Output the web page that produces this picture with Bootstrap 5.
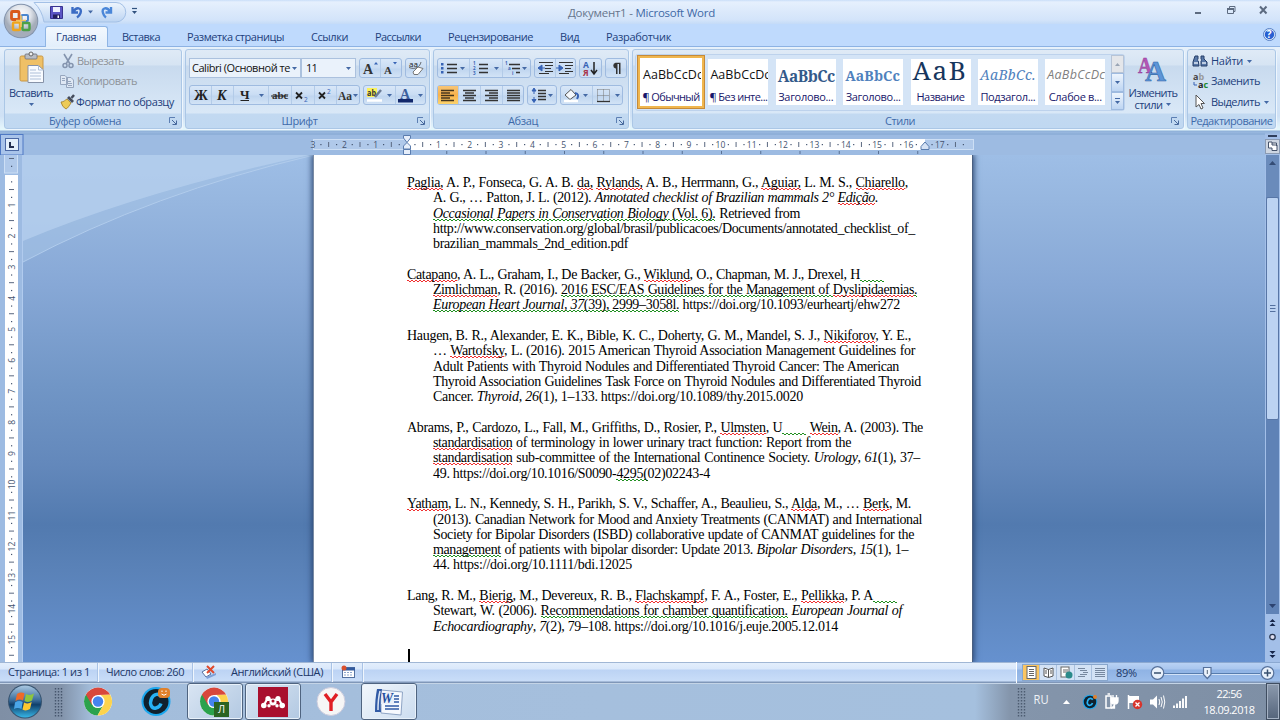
<!DOCTYPE html>
<html lang="ru">
<head>
<meta charset="utf-8">
<title>Документ1 - Microsoft Word</title>
<link rel="stylesheet" href="https://cdn.jsdelivr.net/npm/bootstrap@5.3.0/dist/css/bootstrap.min.css">
<style>
html,body{height:720px;overflow:hidden}
body{width:1280px;font:11px/12px "Open Sans","Noto Sans",sans-serif;color:#1d3f7c;background:#9ebce2}
svg{display:block;flex:none;overflow:visible}
svg text{white-space:pre}
.fit{white-space:nowrap;display:inline-block;flex:none}
.titlebar{height:24px;background:linear-gradient(#c9def8 0,#e6f0fd 2px,#dbe9fb 12px,#d3e4fa 20px,#c4dbf8);position:relative}
.caption{width:147px;margin-left:568px;line-height:26px;font-size:11.5px;color:#66758c}
.caption b{font-weight:400;color:#3f69a6}
.qat{left:0;top:0;z-index:3}
.winbtns{right:0;top:0}
.tabs{height:22px;background:#bfdafd;padding-left:45px;gap:27px;position:relative}
.tabs .nav-link{padding:0;line-height:25px;color:#1d3f7c;font-size:11px}
.tabs .nav-link.active{padding:0 10px;margin-right:-13px;height:21px;margin-top:2px;line-height:20px;background:linear-gradient(#f3f8fe,#e2eefb);border:1px solid #8fb5e4;border-bottom:0;border-radius:3px 3px 0 0;width:63px}
.helpbtn{right:4px;top:4px}
.ribbon{height:88px;padding:3px 4px 0;gap:3px;background:linear-gradient(#8db2e3 0,#8db2e3 1px,#e7f1fb 1px,#d5e5f7 20px,#cfe1f5 70px,#e4f5fb 82px,#e4f8fb 84px,#8fb0d9 85px,#9ebce2)}
.rgroup{height:80px;border:1px solid #abc7e6;border-radius:3px;background:linear-gradient(#dfeaf6 0,#d6e4f3 15px,#c8daee 16px,#d9e8f7 63px,#c2d9f1 64px,#c0d8f1);box-shadow:1px 1px 0 #eef6fd;display:flex;flex-direction:column;flex:none;position:relative}
.rbody{height:64px;flex:none}
.rname{height:15px;line-height:14px;color:#3e6aaa;text-align:center;padding-right:16px}
.launch{position:absolute;right:4px;bottom:3px}
.g1{width:178px}.g2{width:245px}.g3{width:196px}.g4{width:552px}.g5{width:89px}
.g2 .rbody,.g3 .rbody{padding:7.5px 0 0 3px}
.g5 .rname{padding:0}
.row2{margin-top:7px}
.pastecol{width:52px}
.stylecol{width:56px;padding-top:1px}
.strip{display:flex;border:1px solid #9fbbe0;border-radius:3px;height:20px;background:linear-gradient(#d8e7f8,#c9dcf3 9px,#bfd5ef 10px,#d2e3f6);flex:none}
.strip+.strip,.combo+.strip{margin-left:3px}
.strip>button{padding:0;border:0;border-right:1px solid #b3cbe8;background:none;line-height:0;border-radius:0}
.strip>button:last-child{border-right:0}
.strip>.on{background:linear-gradient(#f6c578,#f9b24b 9px,#fbd36d)}
.combo{height:20px;border:1px solid #abc1de;background:#eaf2fb;color:#111;font-size:11px;line-height:18px;padding-left:2px;display:flex;justify-content:space-between;overflow:hidden;flex:none}
.combo.face{width:112px}.combo.size{width:55px;padding-left:4px}
.cmd{display:flex;align-items:center;height:20.3px;padding-top:2px}
.off{color:#8d9299}
.off .fit{margin-left:1px}
.gallery{width:490px;height:57px;background:#d4e4f6;border:1px solid #bdd2ec;border-radius:3px;padding:0;display:flex;margin-left:2px;flex:none}
.gallery .tile{width:60px;height:46px;margin:4px 3.7px 0;background:#fff;overflow:hidden;flex:none;position:relative}
.gallery .tile.sel{box-shadow:0 0 0 1px #fff,0 0 0 3px #f0b64e,0 0 0 4px #c58a3a;margin-left:5px;height:46px}
.tile .sample{height:31px;line-height:32px;color:#111;font-family:"Open Sans";font-size:12.5px;white-space:nowrap;overflow:hidden;padding-left:2px}
.tile .cap{color:#17176b;text-align:center;line-height:13px;white-space:nowrap}
.s-h1{font:bold 15.5px/34px "Noto Serif","DejaVu Serif","Liberation Serif",serif!important;color:#345a8a!important}
.s-h2{font:bold 14px/34px "Noto Serif","DejaVu Serif","Liberation Serif",serif!important;color:#4f81bd!important}
.s-tt{font:26px/22px "Noto Serif","Liberation Serif",serif!important;color:#17365d!important}
.s-st{font:italic 14px/32px "Noto Serif","Liberation Serif",serif!important;color:#4f81bd!important}
.s-wk{font-style:italic;color:#7f7f7f!important}
.gscroll{margin-left:auto}
.work{height:528px;display:grid;grid-template:21px 507px/1fr 15px;background:#9dbbe2}
.desk{grid-column:1;display:flex;background:linear-gradient(#9ebee6 0,#96b6df 50px,#87a8d6 130px,#7196c6 230px,#6388bb 310px,#527aaf 370px,#5a82b8 415px,#6590cd 500px,#6691cf);position:relative;overflow:hidden}
.vruler{width:23px;background:#9dbbe2;flex:none}
.swoosh{left:23px;top:0;position:absolute}
.page{width:660px;height:507px;margin-left:290px;background:#fff;border-left:1px solid #7a8ba3;border-right:1px solid #4a5f80;box-shadow:0 0 6px 1px #28436f;padding:20px 0 0 93px;font:14px/15.31px "Liberation Serif",serif;color:#000;z-index:1;flex:none}
.page p{margin:0 0 15.31px}
.ln{display:block;margin-left:26px;white-space:pre;height:15.31px}
.ln:first-child{margin-left:0}
.sp,.gr{background:repeating-linear-gradient(90deg,#f03030 0 2px,transparent 2px 4px) 0 calc(100% - 1px)/100% 1px no-repeat,repeating-linear-gradient(90deg,transparent 0 2px,#f03030 2px 4px) 0 100%/100% 1px no-repeat}
.gr{background-image:repeating-linear-gradient(90deg,#208f20 0 2px,transparent 2px 4px),repeating-linear-gradient(90deg,transparent 0 2px,#208f20 2px 4px)}
.gap24{display:inline-block;width:24px;height:15px;vertical-align:bottom;letter-spacing:0}
.caret{width:2px;height:14px;background:#000;margin-left:1px}
.vscroll{grid-column:2;grid-row:1/3}
.status{height:21px;background:linear-gradient(#5d7fae 0,#e3eefc 1px,#dae8fb 7px,#bcd3f4 8px,#c9ddf8 19px,#8097b8 20px);color:#1c3767}
.status .cell{height:19px;display:flex;align-items:center;border-right:1px solid #a9c3e6;box-shadow:1px 0 0 #f0f6fd;flex:none;padding:0 0 1px 8px}
.c1{width:98px}.c2{width:95px}.c3{width:139px}.c4{width:31px}
.stright{width:264px;background:linear-gradient(#5d7fae 0,#b9d2f4 1px,#a9c6ee 7px,#8fb3e4 8px,#9cbdea 19px,#8097b8 20px);border-left:1px solid #fff;height:21px}
.views{display:flex;border:1px solid #88a6cc;background:#d3e2f5;height:17px;margin-left:5px}
.taskbar{height:37px;background:linear-gradient(90deg,#7f8fa5 0,#8394ab 62px,#a3bddb 92px,#a5bfdd 600px,#a5c0de 975px,#8495ab 1010px,#7e8fa5);box-shadow:inset 0 1px 0 #c4d4e6}
.tbtn{width:56px;height:37px;border:1px solid #4f6480;border-radius:3px;box-shadow:inset 0 0 0 1px #e8f1fa;background:linear-gradient(135deg,#d9e5f3,#b3c9e2);flex:none;display:flex;justify-content:center;align-items:center}
.tbtn+.tbtn{margin-left:2px}
.tbtn.cur{background:linear-gradient(135deg,#f2f7fc,#cbdcef)}
.clock{width:74px;color:#fff;text-align:center;line-height:16px;padding-top:3px}
.peek{width:14px;height:37px;border:1px solid #3f4d60;box-shadow:inset 0 0 0 1px #a5b2c4;background:linear-gradient(#8c9aae,#55657b)}
</style>
</head>
<body>
<svg width="0" height="0" class="position-absolute">
<defs>
<g id="dd"><path d="M0 0H5L2.5 3Z" fill="#4469a5"/></g>
<g id="launcher"><path d="M.5 6V.5H6" fill="none" stroke="#5c7fb3"/><path d="M3 3L7 7M7.5 3.5V7.5H3.5" fill="none" stroke="#47689c"/></g>
<g id="chrome"><circle r="14" fill="#fff"/><path d="M-12.1-7A14 14 0 0 0-.5 14L5.5 3.5L0 0Z" fill="#2ba24c"/><path d="M12.1-7A14 14 0 0 1-.5 14L5.5 3.2L3-7Z" fill="#fdd34d"/><path d="M-12.1-7A14 14 0 0 1 12.1-7L0-6.5L-6 3.5Z" fill="#d8483c"/><circle r="6.6" fill="#fff"/><circle r="5.2" fill="#4584ee"/></g>
<g id="cicon"><circle r="14.5" fill="#1ba7ee"/><circle r="12.5" fill="#10212e"/><path d="M5.5-4.5C3-8.5-2-8-4.5-3C-7 3-4 7.5 0 6.5C3 6 4.5 3.5 5 2" fill="none" stroke="#27b2f5" stroke-width="3.4"/></g>
<linearGradient id="orb" x2="0" y2="1"><stop stop-color="#a9c8e2"/><stop offset=".45" stop-color="#3c6e9c"/><stop offset=".6" stop-color="#103f6b"/><stop offset="1" stop-color="#37b6e6"/></linearGradient>
<radialGradient id="office" cy=".3"><stop stop-color="#fff"/><stop offset=".6" stop-color="#dfe3ea"/><stop offset="1" stop-color="#a5adba"/></radialGradient>
<linearGradient id="gl" x2="0" y2="1"><stop stop-color="#eef5fd"/><stop offset="1" stop-color="#bcd4f2"/></linearGradient>
</defs>
</svg>

<header class="titlebar">
  <div class="caption fit" data-w="147">Документ1 - <b>Microsoft Word</b></div>
  <div class="position-absolute qat">
    <svg width="145" height="44">
      <path d="M34 2.500H116a9.500 9.500 0 0 1 0 19.500H44Q42 10 34 2.500Z" fill="url(#gl)" stroke="#a3c0e6"/>
      <path d="M50.500 6.500H62.500V18.500H50.500Z" fill="#5b55c4" stroke="#38338f"/><path d="M53 7H60V12H53Z" fill="#eef1ff"/><path d="M53 14.500H60V18.500H53Z" fill="#23205e"/><path d="M57.500 15.500H59V18H57.500Z" fill="#fff"/>
      <path d="M72.500 7V12.500H78M73.500 12C76 6.500 82.500 7.500 80.500 13C79.800 15 78.500 16.500 77 17.500" fill="none" stroke="#3b6cc4" stroke-width="2.400"/>
      <path d="M111 7V12.500H105.500M110 12C107.500 6.500 101 7.500 103 13C103.500 15 104.500 16.500 106 17.500" fill="none" stroke="#4a86d8" stroke-width="2.400"/>
      <use href="#dd" x="88" y="10.500"/><path d="M132 8.500H137" stroke="#31527f" stroke-width="1.200"/><path d="M132 11H137L134.500 14Z" fill="#31527f"/>
      <circle cx="21" cy="21" r="17.300" fill="#8393ac"/><circle cx="21" cy="21" r="16.300" fill="url(#office)"/>
      <g fill="none"><rect x="11.500" y="11.500" width="7.500" height="8" rx="1" stroke="#d9581c" stroke-width="2.800"/><rect x="21.500" y="15" width="6.500" height="6" rx="1" stroke="#4a86cf" stroke-width="2"/><rect x="13" y="22.500" width="7" height="7.500" rx="1" stroke="#efa51e" stroke-width="2.400"/><rect x="22.500" y="23" width="7" height="7" rx="1" stroke="#4ca146" stroke-width="2.400"/></g>
      <path d="M16 20.500H26M21 15.500V27" stroke="#f4c45c" stroke-width="1.600"/>
    </svg>
  </div>
  <div class="position-absolute winbtns"><svg width="90" height="24"><path d="M5 13H11" stroke="#5d6b80" stroke-width="2"/><path d="M37.500 8.500H43.500V13.500H37.500ZM39.500 8V6.500H45V11.500H44" fill="none" stroke="#5d6b80"/><path d="M37 9H44" stroke="#5d6b80" stroke-width="2"/><path d="M70 6.500L76.500 13.500M76.500 6.500L70 13.500" stroke="#5d6b80" stroke-width="2"/></svg></div>
</header>

<nav class="nav tabs flex-nowrap">
  <a class="nav-link active"><span class="fit" data-w="40">Главная</span></a>
  <a class="nav-link"><span class="fit" data-w="38">Вставка</span></a>
  <a class="nav-link"><span class="fit" data-w="97">Разметка страницы</span></a>
  <a class="nav-link"><span class="fit" data-w="37">Ссылки</span></a>
  <a class="nav-link"><span class="fit" data-w="46">Рассылки</span></a>
  <a class="nav-link"><span class="fit" data-w="85">Рецензирование</span></a>
  <a class="nav-link"><span class="fit" data-w="19">Вид</span></a>
  <a class="nav-link"><span class="fit" data-w="65">Разработчик</span></a>
  <svg class="position-absolute helpbtn" width="13" height="13"><circle cx="6.500" cy="6.500" r="6" fill="#e6effb" stroke="#557fc4"/><circle cx="6.500" cy="6.500" r="4.700" fill="#2860d2"/><text x="3.800" y="10.300" font-size="10" font-weight="bold" fill="#fff">?</text></svg>
</nav>

<section class="ribbon d-flex">
  <div class="rgroup g1">
    <div class="rbody d-flex">
      <div class="text-center pastecol">
        <svg width="52" height="37"><rect x="15" y="6" width="23" height="25" rx="1.500" fill="#efc066" stroke="#c99743"/><rect x="20" y="4" width="12" height="5" rx="1" fill="#b9bdc4" stroke="#6c7078" stroke-width=".8"/><circle cx="26" cy="4" r="2" fill="#eee" stroke="#666"/><path d="M23 15.500H33.500L38.500 20V32.500H23Z" fill="#f8fbff" stroke="#8793a8"/><path d="M33.500 15.500V20H38.500M25 20H31M25 23H36M25 26H36M25 29H36" fill="none" stroke="#aebfd8"/></svg>
        <span class="fit" data-w="44">Вставить</span>
        <svg width="52" height="8"><use href="#dd" x="24" y="4"/></svg>
      </div>
      <div class="ps-1">
        <div class="cmd off"><svg width="15" height="16"><path d="M3 1L9 11M11 1L5 11" stroke="#8494ae" stroke-width="1.600"/><circle cx="4" cy="12.500" r="2" fill="none" stroke="#8494ae" stroke-width="1.500"/><circle cx="10" cy="12.500" r="2" fill="none" stroke="#8494ae" stroke-width="1.500"/></svg><span class="fit" data-w="47">Вырезать</span></div>
        <div class="cmd off"><svg width="15" height="16"><path d="M-.5 2.500H4L6.500 5V11.500H-.5ZM5.500 4.500H10L12.500 7V14.500H5.500Z" fill="#dfe8f4" stroke="#96a6be"/><path d="M1 5.500H4M1 7.500H4M7 8.500H10M7 10.500H11M7 12.500H11" stroke="#96a6be"/></svg><span class="fit" data-w="60">Копировать</span></div>
        <div class="cmd"><svg width="15" height="16"><path d="M0 8C3 8 4 6 6 5L10 9C8 12 7 14 5 15Q1 13 0 8Z" fill="#edcb57" stroke="#a17c25" stroke-width=".8"/><path d="M6 4L11 9L13 7L8 2Z" fill="#454c5c"/><path d="M10.500 4L13 1" stroke="#434b5b" stroke-width="2.500"/></svg><span class="fit" data-w="98">Формат по образцу</span></div>
      </div>
    </div>
    <div class="rname"><span class="fit" data-w="72">Буфер обмена</span></div><svg class="launch" width="8" height="8"><use href="#launcher"/></svg>
  </div>

  <div class="rgroup g2">
    <div class="rbody">
      <div class="d-flex">
        <div class="combo face"><span class="fit" data-w="98">Calibri (Основной те</span><svg width="9" height="18"><use href="#dd" x="1" y="8"/></svg></div>
        <div class="combo size"><span class="fit" data-w="11">11</span><svg width="12" height="18"><use href="#dd" x="3" y="8"/></svg></div>
        <div class="strip"><button><svg width="20" height="18"><text x="3" y="14.500" font-family="Liberation Serif" font-weight="bold" font-size="14" fill="#333">A</text><path d="M14 5.500L16 3L18 5.500Z" fill="#3763b5"/></svg></button><button><svg width="20" height="18"><text x="3" y="14.500" font-family="Liberation Serif" font-weight="bold" font-size="11" fill="#333">A</text><path d="M12 3L16 3L14 5.500Z" fill="#3763b5"/></svg></button></div>
        <div class="strip"><button><svg width="20" height="18"><text x="3" y="8" font-size="8" fill="#222">aa</text><path d="M3 8.500C9 11 14 8 15 3" stroke="#333" fill="none" stroke-width=".7"/><path d="M7 13L12 8L17 9.500L12 15.500H8Z" fill="#fff" stroke="#777"/></svg></button></div>
      </div>
      <div class="d-flex row2">
        <div class="strip"><button><svg width="21" height="18"><text x="4" y="14" font-size="14" font-weight="bold" font-family="Liberation Serif" fill="#222">Ж</text></svg></button><button><svg width="21" height="18"><text x="5" y="14" font-size="14" font-weight="bold" font-style="italic" font-family="Liberation Serif" fill="#222">К</text></svg></button><button><svg width="34" height="18"><text x="6" y="12.500" font-size="13" font-weight="bold" font-family="Liberation Serif" fill="#222">Ч</text><path d="M6.500 14.500H15" stroke="#222"/><use href="#dd" x="25" y="8"/></svg></button><button><svg width="22" height="18"><text x="3" y="13" font-size="11" font-weight="bold" font-family="Liberation Serif" fill="#333">abc</text><path d="M2 10H19" stroke="#222"/></svg></button><button><svg width="22" height="18"><path d="M4 6.500L10 12.500M10 6.500L4 12.500" stroke="#222" stroke-width="1.800"/><text x="12" y="15.500" font-size="6.500" fill="#3763b5">2</text></svg></button><button><svg width="21" height="18"><path d="M4 6.500L10 12.500M10 6.500L4 12.500" stroke="#222" stroke-width="1.800"/><text x="12" y="7.500" font-size="6.500" fill="#3763b5">2</text></svg></button><button><svg width="22" height="18"><text x="1" y="14" font-size="12.500" font-weight="bold" font-family="Liberation Serif" fill="#333" textLength="14" lengthAdjust="spacingAndGlyphs">Aa</text><use href="#dd" x="16" y="8"/></svg></button></div>
        <div class="strip"><button><svg width="31" height="18"><rect x="3" y="2" width="10" height="9" fill="#fbf25a"/><text x="3" y="10" font-size="9" font-weight="bold" fill="#333" textLength="9" lengthAdjust="spacingAndGlyphs">ab</text><path d="M11 11L17 4" stroke="#6b7c96" stroke-width="2.500"/><path d="M3 14.500H18" stroke="#fff" stroke-width="2.500"/><use href="#dd" x="23" y="8"/></svg></button><button><svg width="29" height="18"><text x="4" y="12.500" font-size="14" font-weight="bold" font-family="Liberation Serif" fill="#3c5f9d">A</text><rect x="2" y="13" width="15" height="3.500" fill="#13286b"/><use href="#dd" x="22" y="8"/></svg></button></div>
      </div>
    </div>
    <div class="rname"><span class="fit" data-w="36">Шрифт</span></div><svg class="launch" width="8" height="8"><use href="#launcher"/></svg>
  </div>

  <div class="rgroup g3">
    <div class="rbody">
      <div class="d-flex">
        <div class="strip"><button><svg width="31" height="18"><path d="M9 5.500H19M9 9.500H19M9 13.500H19" stroke="#333" stroke-width="1.300"/><g fill="#3763b5"><rect x="3" y="4" width="2.500" height="2.500"/><rect x="3" y="8" width="2.500" height="2.500"/><rect x="3" y="12" width="2.500" height="2.500"/></g><use href="#dd" x="22" y="8"/></svg></button><button><svg width="32" height="18"><path d="M9 5.500H18M9 9.500H18M9 13.500H18" stroke="#333" stroke-width="1.300"/><g fill="#3763b5" font-size="4.500" font-weight="bold"><text x="3" y="6">1</text><text x="3" y="11">2</text><text x="3" y="16">3</text></g><use href="#dd" x="24" y="8"/></svg></button><button><svg width="27" height="18"><path d="M6 5.500H17M9 9.500H17M13 13.500H17" stroke="#333" stroke-width="1.300"/><g fill="#3763b5" font-size="4.500" font-weight="bold"><text x="2" y="6">1</text><text x="5" y="11">a</text><text x="9" y="16">i</text></g><use href="#dd" x="19" y="8"/></svg></button></div>
        <div class="strip"><button><svg width="20" height="18"><path d="M4 3.500H18M10 6.500H18M10 9.500H16M10 12.500H18M4 14.500H14" stroke="#333" stroke-width="1.200"/><path d="M3 9L7 6V12ZM6 9H10" fill="#3763b5" stroke="#3763b5"/></svg></button><button><svg width="19" height="18"><path d="M3 3.500H17M9 6.500H17M9 9.500H15M9 12.500H17M3 14.500H13" stroke="#333" stroke-width="1.200"/><path d="M7 9L3 6V12ZM0 9H4" fill="#3763b5" stroke="#3763b5"/></svg></button></div>
        <div class="strip"><button><svg width="21" height="18"><text x="3" y="8.500" font-size="8.500" font-weight="bold" fill="#3763b5">А</text><text x="3" y="16.500" font-size="8.500" font-weight="bold" fill="#a8324a">Я</text><path d="M14 3V14M11 11L14 15L17 11" fill="none" stroke="#222" stroke-width="1.500"/></svg></button></div>
        <div class="strip"><button><svg width="20" height="18"><path d="M14.500 3.700H9.500A3 3 0 0 0 9.500 9.500H10V15H11.500V5H13V15H14.500Z" fill="#333"/></svg></button></div>
      </div>
      <div class="d-flex row2">
        <div class="strip"><button class="on"><svg width="20" height="18"><path d="M3 4.500H16M3 7H12M3 9.500H16M3 12H12M3 14.500H16" stroke="#44351c" stroke-width="1.300"/></svg></button><button><svg width="21" height="18"><path d="M4 4.500H17M6 7H15M4 9.500H17M6 12H15M4 14.500H17" stroke="#333" stroke-width="1.300"/></svg></button><button><svg width="21" height="18"><path d="M4 4.500H17M8 7H17M4 9.500H17M8 12H17M4 14.500H17" stroke="#333" stroke-width="1.300"/></svg></button><button><svg width="20" height="18"><path d="M4 4.500H17M4 7H17M4 9.500H17M4 12H17M4 14.500H17" stroke="#333" stroke-width="1.300"/></svg></button></div>
        <div class="strip"><button><svg width="28" height="18"><path d="M10 4.500H18M10 7.500H18M10 10.500H18M10 13.500H18" stroke="#333" stroke-width="1.300"/><path d="M6 3V8M6 11V16M4 5L6 2L8 5ZM4 13.500L6 16.500L8 13.500Z" fill="#3763b5" stroke="#3763b5"/><use href="#dd" x="20" y="8"/></svg></button></div>
        <div class="strip"><button><svg width="31" height="18"><path d="M4 9L10 3.500L15 9L9 13.500Z" fill="#f4f8fd" stroke="#555"/><path d="M14 7Q19 8 16 13" stroke="#3763b5" fill="none" stroke-width="2"/><path d="M3 15H17" stroke="#fff" stroke-width="2.500"/><use href="#dd" x="22" y="8"/></svg></button><button><svg width="29" height="18"><path d="M4.500 3.500H16.500V15M4.500 3.500V15M10.500 3.500V15M4.500 9.500H16.500" stroke="#777" stroke-dasharray="1 1" fill="none"/><path d="M4 15.500H17" stroke="#333" stroke-width="1.300"/><use href="#dd" x="22" y="8"/></svg></button></div>
      </div>
    </div>
    <div class="rname"><span class="fit" data-w="30">Абзац</span></div><svg class="launch" width="8" height="8"><use href="#launcher"/></svg>
  </div>

  <div class="rgroup g4">
    <div class="rbody d-flex pt-1">
      <div class="gallery">
        <div class="tile sel"><div class="sample"><span class="fit" data-w="60">AaBbCcDc</span></div><div class="cap"><span class="fit" data-w="57">¶ Обычный</span></div></div>
        <div class="tile"><div class="sample"><span class="fit" data-w="60">AaBbCcDc</span></div><div class="cap"><span class="fit" data-w="58">¶ Без инте...</span></div></div>
        <div class="tile"><div class="sample s-h1"><span class="fit" data-w="57">AaBbCc</span></div><div class="cap"><span class="fit" data-w="55">Заголово...</span></div></div>
        <div class="tile"><div class="sample s-h2"><span class="fit" data-w="55">AaBbCc</span></div><div class="cap"><span class="fit" data-w="55">Заголово...</span></div></div>
        <div class="tile"><div class="sample s-tt"><span class="fit" data-w="55">AaB</span></div><div class="cap"><span class="fit" data-w="48">Название</span></div></div>
        <div class="tile"><div class="sample s-st"><span class="fit" data-w="56">AaBbCc.</span></div><div class="cap"><span class="fit" data-w="55">Подзагол...</span></div></div>
        <div class="tile"><div class="sample s-wk"><span class="fit" data-w="58">AaBbCcDc</span></div><div class="cap"><span class="fit" data-w="53">Слабое в...</span></div></div>
        <svg class="gscroll" width="13" height="55"><rect x=".5" y=".5" width="12" height="17" fill="#e4e6ea" stroke="#b7c4d6"/><path d="M4 11H9L6.500 8Z" fill="#9aa5b5"/><rect x=".5" y="18.500" width="12" height="18" fill="url(#gl)" stroke="#9fbbe0"/><use href="#dd" x="4" y="26"/><rect x=".5" y="37.500" width="12" height="17" fill="url(#gl)" stroke="#9fbbe0"/><path d="M4 43.500H9" stroke="#4469a5"/><use href="#dd" x="4" y="46"/></svg>
      </div>
      <div class="text-center stylecol">
        <svg width="56" height="32"><text x="13" y="18" font-size="24" font-weight="bold" font-family="Liberation Serif" fill="#b455b5" stroke="#8c3b95" stroke-width=".5" textLength="14" lengthAdjust="spacingAndGlyphs">A</text><text x="20" y="26" font-size="29" font-weight="bold" font-family="Liberation Serif" fill="#5d95d8" stroke="#3568a8" stroke-width=".6" textLength="21" lengthAdjust="spacingAndGlyphs">A</text></svg>
        <span class="fit" data-w="49">Изменить</span><div class="d-flex justify-content-center"><span class="fit" data-w="28">стили</span><svg width="9" height="12"><use href="#dd" x="3" y="4"/></svg></div>
      </div>
    </div>
    <div class="rname"><span class="fit" data-w="30">Стили</span></div><svg class="launch" width="8" height="8"><use href="#launcher"/></svg>
  </div>

  <div class="rgroup g5">
    <div class="rbody ps-1">
      <div class="cmd"><svg width="19" height="16"><path d="M3 3H6V6L7 13H1V9ZM9 3H12V6L15 9V13H9Z" fill="#5878a8" stroke="#263e68"/><path d="M6 7H9M2 10H6M10 10H14" stroke="#dfe9f5" stroke-width="1.500"/></svg><span class="fit" data-w="32">Найти</span><svg width="12" height="10"><use href="#dd" x="4" y="4"/></svg></div>
      <div class="cmd"><svg width="19" height="16"><text x="1" y="7" font-size="9" font-weight="bold" fill="#444">a<tspan fill="#999">b</tspan></text><text x="6" y="15" font-size="9" font-weight="bold" fill="#222">a<tspan fill="#218a31">c</tspan></text><path d="M2 9V12H5" fill="none" stroke="#3763b5"/></svg><span class="fit" data-w="49">Заменить</span></div>
      <div class="cmd"><svg width="19" height="16"><path d="M4 1V13L7 10.500L9 15L11 14L9 9.500H12.500Z" fill="#fff" stroke="#555"/></svg><span class="fit" data-w="49">Выделить</span><svg width="12" height="10"><use href="#dd" x="4" y="4"/></svg></div>
    </div>
    <div class="rname"><span class="fit" data-w="82">Редактирование</span></div>
  </div>
</section>

<main class="work">
  <svg id="hruler" width="1265" height="21"><rect x="0" y="-1" width="1265" height="2" fill="#8fb0d9"/><rect x=".5" y=".5" width="22.500" height="20.500" fill="#a9c4ea" stroke="#4f79c4"/><rect x="5.500" y="4.500" width="13" height="12" fill="#e3effb" stroke="#4b69a5"/><path d="M10 8V13H14" fill="none" stroke="#222f50" stroke-width="2"/><rect x="313.500" y="5.500" width="660" height="10" fill="#b0c9ea" stroke="#cddff5"/><rect x="407" y="5" width="518" height="11" fill="#fff"/></svg>
  <div class="vscroll"><svg width="15" height="528"><rect width="15" height="528" fill="#a3bfe8"/><path d="M3 2H12" stroke="#2f3f5c" stroke-width="2"/><rect x=".5" y="5.500" width="14" height="14" fill="#ced6e2" stroke="#8b9bb3"/><path d="M3.500 8H7V11H12V16.500H7V14H3.500ZM7 9H11.500V12" fill="#fff" stroke="#45526a"/><rect x="1" y="21" width="13" height="459" fill="#5f82b6"/><rect x="1" y="21" width="13" height="42" fill="#6a8bbb"/><path d="M4 31H11L7.500 27Z" fill="#344c75"/><rect x="1.500" y="63.500" width="12" height="222" rx="1.500" fill="#bcd3f2" stroke="#5876a6"/><path d="M5 171.500H10.500M5 174.500H10.500M5 177.500H10.500" stroke="#54719f"/><path d="M4 470H11L7.500 474Z" fill="#2c4370"/><path d="M4.500 488L7.500 485L10.500 488ZM4.500 492L7.500 489L10.500 492Z" fill="#16264a"/><circle cx="7.500" cy="503" r="2.700" fill="#dde" stroke="#26344f" stroke-width="1.300"/><path d="M4.500 517L7.500 520L10.500 517ZM4.500 521L7.500 524L10.500 521Z" fill="#16264a"/></svg></div>
  <div class="desk">
    <svg class="swoosh" width="291" height="110"><path d="M0 0H291Q130 38 0 107Z" fill="#a4c1e4" opacity=".6"/><path d="M0 0H287Q120 36 0 86Z" fill="#bad2f0" opacity=".65"/><path d="M0 107Q130 38 291 0" fill="none" stroke="#b1ccec" stroke-width="1"/></svg>
    <div class="vruler"><svg id="vruler" width="23" height="507"><rect x="4.500" y="-1" width="13" height="19" fill="#b0c9ea" stroke="#cddff5"/><rect x="5" y="20" width="13" height="490" fill="#fff"/><path d="M22.500 0V507" stroke="#b1cbee"/></svg></div>
    <article class="page">
      <p><span class="ln" data-w="501"><span class="sp">Paglia,</span> A. P., Fonseca, G. A. B. <span class="sp">da,</span> <span class="sp">Rylands,</span> A. B., Herrmann, G., <span class="sp">Aguiar,</span> L. M. S., <span class="sp">Chiarello</span>,</span><span class="ln" data-w="445">A. G., … Patton, J. L. (2012). <i>Annotated checklist of Brazilian mammals 2° <span class="sp">Edição</span>.</i></span><span class="ln" data-w="367"><i class="gr">Occasional Papers in Conservation Biology</i><span class="gr"> (Vol. 6).</span> Retrieved from</span><span class="ln" data-w="482">http://www.conservation.org/global/brasil/publicacoes/Documents/annotated_checklist_of_</span><span class="ln" data-w="195">brazilian_mammals_2nd_edition.pdf</span></p>
      <p><span class="ln" data-w="477"><span class="sp">Catapano</span>, A. L., Graham, I., De Backer, G., <span class="sp">Wiklund</span>, O., Chapman, M. J., Drexel, H<span class="gr gap24"></span></span><span class="ln" data-w="484"><span class="sp">Zimlichman</span>, R. (2016). <span class="gr">2016 ESC/EAS Guidelines for the Management of </span><span class="sp">Dyslipidaemias</span><span class="gr">.</span></span><span class="ln" data-w="467"><i class="gr">European Heart Journal, 37</i><span class="gr">(39), 2999–3058l.</span> https://doi.org/10.1093/eurheartj/ehw272</span></p>
      <p><span class="ln" data-w="504">Haugen, B. R., Alexander, E. K., Bible, K. C., Doherty, G. M., Mandel, S. J., <span class="sp">Nikiforov</span>, Y. E.,</span><span class="ln" data-w="482">… <span class="sp">Wartofsky</span>, L. (2016). 2015 American Thyroid Association Management Guidelines for</span><span class="ln" data-w="466">Adult Patients with Thyroid Nodules and Differentiated Thyroid Cancer: The American</span><span class="ln" data-w="488">Thyroid Association Guidelines Task Force on Thyroid Nodules and Differentiated Thyroid</span><span class="ln" data-w="370">Cancer. <i>Thyroid</i>, <i>26</i>(1), 1–133. https://doi.org/10.1089/thy.2015.0020</span></p>
      <p><span class="ln" data-w="516">Abrams, P., Cardozo, L., Fall, M., Griffiths, D., Rosier, P., <span class="sp">Ulmsten</span>, U<span class="gr gap24"></span> <span class="sp">Wein</span>, A. (2003). The</span><span class="ln" data-w="418"><span class="sp">standardisation</span> of terminology in lower urinary tract function: Report from the</span><span class="ln" data-w="487"><span class="sp">standardisation</span> sub-committee of the International Continence Society. <i>Urology</i>, <i>61</i>(1), 37–</span><span class="ln" data-w="277">49. https://doi.org/10.1016/S0090-<span class="gr">4295(</span>02)02243-4</span></p>
      <p><span class="ln" data-w="504"><span class="sp">Yatham</span>, L. N., Kennedy, S. H., Parikh, S. V., Schaffer, A., Beaulieu, S., <span class="sp">Alda</span>, M., … <span class="sp">Berk</span>, M.</span><span class="ln" data-w="489">(2013). Canadian Network for Mood and Anxiety Treatments (CANMAT) and International</span><span class="ln" data-w="481">Society for Bipolar Disorders (ISBD) collaborative update of CANMAT guidelines for the</span><span class="ln" data-w="475"><span class="gr">management</span> of patients with bipolar disorder: Update 2013. <i>Bipolar Disorders</i>, <i>15</i>(1), 1–</span><span class="ln" data-w="199">44. https://doi.org/10.1111/bdi.12025</span></p>
      <p><span class="ln" data-w="490">Lang, R. M., <span class="sp">Bierig</span>, M., Devereux, R. B., <span class="sp">Flachskampf</span>, F. A., Foster, E., <span class="sp">Pellikka</span>, P. A<span class="gr gap24"></span></span><span class="ln" data-w="469">Stewart, W. (2006). <span class="gr">Recommendations for chamber quantification.</span> <i>European Journal of</i></span><span class="ln" data-w="405"><i>Echocardiography</i>, <i>7</i>(2), 79–108. https://doi.org/10.1016/j.euje.2005.12.014</span></p>
      <div class="caret"></div>
    </article>
  </div>
</main>

<footer class="status d-flex justify-content-between">
  <div class="d-flex align-items-center">
    <div class="cell c1"><span class="fit" data-w="82">Страница: 1 из 1</span></div>
    <div class="cell c2"><span class="fit" data-w="78">Число слов: 260</span></div>
    <div class="cell c3"><svg width="30" height="16"><path d="M1 8L6 5L10 10L5 13Z" fill="#fff" stroke="#57719f"/><path d="M5 13L15 9V11L6 15Z" fill="#7da0d8"/><path d="M6 2L13 9M13 2L6 9" stroke="#e0492c" stroke-width="2"/></svg><span class="fit" data-w="92">Английский (США)</span></div>
    <div class="cell c4"><svg width="16" height="14"><rect x="2.500" y="2.500" width="12" height="10" fill="#fff" stroke="#54719f"/><path d="M2 4H15" stroke="#335a9d" stroke-width="3"/><path d="M4 7.500H13M4 10H13" stroke="#8ca5cb" stroke-dasharray="2 1"/><circle cx="4" cy="3" r="2.500" fill="#d9502d"/></svg></div>
  </div>
  <div class="stright d-flex align-items-center">
    <div class="views"><svg width="84" height="15"><rect width="16" height="15" fill="#fbc561"/><rect x="4" y="1.500" width="9" height="12" fill="#fff" stroke="#666"/><path d="M6 4.500H11M6 6.500H11M6 8.500H11M6 10.500H11" stroke="#666"/><path d="M21 3L25.500 4.500L30 3V11L25.500 12.500L21 11ZM25.500 4V12.500M22 6H24M22 8H24M27 6H29M27 8H29" fill="#fff" stroke="#555"/><rect x="38" y="2" width="8" height="10" fill="#fff" stroke="#666"/><path d="M40 5H45M40 7H45" stroke="#666"/><circle cx="46" cy="10" r="3.500" fill="#2b8a8a"/><path d="M55 3.500H62M57 5.500H64M60 7.500H65M57 9.500H64M55 11.500H62M72 3.500H82M72 5.500H82M72 7.500H82M72 9.500H82M72 11.500H82" stroke="#77889f"/><path d="M16.500 0V15M33.500 0V15M51.500 0V15M68.500 0V15" stroke="#a9c0de"/></svg></div>
    <span class="fit ms-2" data-w="21">89%</span>
    <svg width="143" height="20" class="ms-auto"><path d="M27 10.500H123" stroke="#567cae"/><path d="M27 11.500H123" stroke="#d3e3f8"/><g fill="#e9f1fb" stroke="#56719b" stroke-width="1.200"><circle cx="20.500" cy="10" r="6.300"/><circle cx="130.500" cy="10" r="6.300"/><path d="M66.500 4.500H74V11.500L70.300 15.500L66.500 11.500Z"/></g><path d="M17 10H24M127 10H134M130.500 6.500V13.500" stroke="#38506f" stroke-width="1.500"/><path d="M70.300 7V11" stroke="#567"/></svg>
  </div>
</footer>

<div class="taskbar d-flex">
  <svg width="187" height="37"><circle cx="25" cy="18.500" r="17" fill="#37536f"/><circle cx="25" cy="18.500" r="16" fill="url(#orb)"/><path d="M17 11Q21 8.500 24.500 10.500L23 17.500Q19.500 15.500 15.500 18Z" fill="#ee6a28"/><path d="M26 11Q30 13 34 10.500L32 17.500Q28.500 20 24.500 18Z" fill="#8dc63f"/><path d="M15 19.500Q19 17 22.700 19L21.500 26Q17.500 24 14 26Z" fill="#4aa6e8"/><path d="M24 19.500Q28 21.500 31.700 19L30 26Q26 28.500 22.500 26.500Z" fill="#fdc82f"/><path d="M55.500 5V34M58.500 5V34M61.500 5V34" stroke="#46566d" stroke-width="1.400" stroke-dasharray="1.500 1.500"/><use href="#chrome" transform="translate(98 18.500)"/><use href="#cicon" transform="translate(156 18.500)"/><rect x="158" y="5" width="12" height="10" rx="4" fill="#e0812c"/><path d="M162 7.500V9M166 7.500V9M161.500 11Q164 13.500 166.500 11" stroke="#fff" fill="none"/></svg>
  <div class="tbtn"><svg width="32" height="30"><use href="#chrome" transform="translate(15 14.500)"/><rect x="15" y="15" width="15" height="15" fill="#2b6422"/><text x="19" y="26" font-size="10" fill="#fff">Л</text></svg></div>
  <div class="tbtn"><svg width="30" height="30"><rect width="30" height="30" fill="#a90f2e"/><path d="M6 18L9.500 11.500L15 14L20.500 11.500L24 18" fill="none" stroke="#fff" stroke-width="2.200"/><g fill="#fff"><circle cx="10" cy="11.500" r="2.600"/><circle cx="20" cy="11.500" r="2.600"/><circle cx="15" cy="15" r="3.600"/><circle cx="5.800" cy="18.500" r="2.800"/><circle cx="24.200" cy="18.500" r="2.800"/><circle cx="11" cy="18.800" r="1.700"/><circle cx="19" cy="18.800" r="1.700"/></g><circle cx="15" cy="14" r="1.500" fill="#a90f2e"/></svg></div>
  <svg width="60" height="37"><circle cx="30" cy="18.500" r="14" fill="#f6f6f6" stroke="#ccd"/><path d="M24 11L30 19L36 11M30 18V28" fill="none" stroke="#e01f25" stroke-width="3.400"/></svg>
  <div class="tbtn cur"><svg width="32" height="30"><path d="M8 3L29.500 5L28 28L8 26Z" fill="#f6f9fe" stroke="#8fa5c5"/><path d="M21 9H26M21 12H26M21 15H26M12 19H26M12 22H26" stroke="#315aa5" stroke-width="1.500"/><path d="M9 2H4Q2 12 2 25H8Q7 12 9 2Z" fill="#315aa5"/><path d="M7 4Q5 12 5 23" fill="none" stroke="#dbe6f5" stroke-width="1.500"/><path d="M9 5H21V17H8Z" fill="#eaf0fa"/><text x="8" y="16" font-size="14" font-weight="bold" font-style="italic" font-family="Liberation Serif" fill="#244f9e" textLength="12" lengthAdjust="spacingAndGlyphs">W</text></svg></div>
  <svg class="ms-auto" width="175" height="37"><path d="M1.500 5V34M4.500 5V34M7.500 5V34" stroke="#4d5c71" stroke-width="1.400" stroke-dasharray="1.500 1.500"/><text x="16.500" y="20.500" font-size="12" fill="#eef2f7" textLength="15" lengthAdjust="spacingAndGlyphs">RU</text><path d="M46 21H53L49.500 17Z" fill="#fff"/><use href="#cicon" transform="translate(73 19) scale(.5)"/><circle cx="78" cy="14" r="2" fill="#e0812c"/><path d="M89 13H94V25H89ZM90.500 11H93" fill="none" stroke="#fff" stroke-width="1.500"/><path d="M94 15H101V18Q101 21 97.500 21T94 18ZM96 12V15M99.500 12V15M97.500 21V25H94" fill="#fff" stroke="#fff" stroke-width="1.300"/><path d="M111.500 12V26" stroke="#fff" stroke-width="1.500"/><path d="M112 13H122V20H112Z" fill="#fff"/><circle cx="120.500" cy="21.500" r="4.700" fill="#d8342c"/><path d="M118.500 19.500L122.500 23.500M122.500 19.500L118.500 23.500" stroke="#fff" stroke-width="1.300"/><path d="M133 16.500H136L140 12.500V25.500L136 21.500H133Z" fill="#fff"/><path d="M142 16Q143.500 19 142 22M144 14Q146.500 19 144 24M146.500 12.500Q149 19 146.500 25.500" fill="none" stroke="#fff"/><path d="M157 22.500V25M160 20.500V25M163 18V25M166 15.500V25M169 13V25" stroke="#fff" stroke-width="1.900"/></svg>
  <div class="clock"><div class="fit" data-w="25">22:56</div><div class="fit" data-w="51">18.09.2018</div></div>
  <div class="peek"></div>
</div>

<script src="https://cdn.jsdelivr.net/npm/bootstrap@5.3.0/dist/js/bootstrap.bundle.min.js"></script>
<script>
const NS = 'http://www.w3.org/2000/svg';
function add(parent, tag, attrs, text) {
  const el = document.createElementNS(NS, tag);
  for (const k in attrs) el.setAttribute(k, attrs[k]);
  if (text) el.textContent = text;
  parent.append(el);
}
// Spread each label over its measured width; document lines keep wide word gaps.
document.querySelectorAll('[data-w]').forEach(el => {
  const range = document.createRange();
  range.selectNodeContents(el);
  const diff = el.dataset.w - range.getBoundingClientRect().width;
  const text = el.textContent, spaces = text.split(' ').length - 1;
  const tight = el.classList.contains('ln') && spaces > 6 ? .07 : 0;
  el.style.letterSpacing = (diff / text.length - tight) + 'px';
  if (tight) el.style.wordSpacing = (tight * text.length / spaces) + 'px';
});
// Horizontal ruler: one unit is a centimetre.
const hr = document.getElementById('hruler');
for (let q = -12; q <= 71; q++) {
  const x = 407 + q * 31.34 / 4, n = Math.abs(q / 4);
  if (q === 0 || q === 66) continue;
  if (q % 4 === 0) add(hr, 'text', {x, y: 13.5, 'text-anchor': 'middle', 'font-size': 8.5, fill: '#44546f'}, String(n));
  else if (q % 2 === 0) add(hr, 'rect', {x: x - .5, y: 8, width: 1, height: 5, fill: '#5a6880'});
  else add(hr, 'rect', {x: x - .5, y: 10, width: 1.2, height: 1.2, fill: '#44546f'});
}
for (let i = 1; i <= 13; i++) add(hr, 'rect', {x: 407 + i * 39.25, y: 17, width: 1, height: 3, fill: '#5a7194'});
add(hr, 'path', {d: 'M403.500 1.500H410.500V4L407 8.500L403.500 4ZM407 8.500L410.500 12V15H403.500V12ZM403.500 15.500H410.500V20.500H403.500Z', fill: '#e6eefa', stroke: '#5a7cae'});
add(hr, 'path', {d: 'M925 8L929 12.500V15.500H921V12.500Z', fill: '#d5e2f4', stroke: '#5a7cae'});
// Vertical ruler.
const vr = document.getElementById('vruler');
for (let q = -2; q <= 63; q++) {
  const y = 19 + q * 31.05 / 4;
  if (q === 0 || y < 1) continue;
  if (q % 4 === 0) add(vr, 'text', {transform: `translate(14.500 ${y}) rotate(-90)`, 'text-anchor': 'middle', 'font-size': 8.5, fill: '#44546f'}, String(q / 4));
  else if (q % 2 === 0) add(vr, 'rect', {x: 9, y: y - .5, width: 5, height: 1, fill: '#5a6880'});
  else add(vr, 'rect', {x: 11, y: y - .5, width: 1.2, height: 1.2, fill: '#44546f'});
}
</script>
</body>
</html>
